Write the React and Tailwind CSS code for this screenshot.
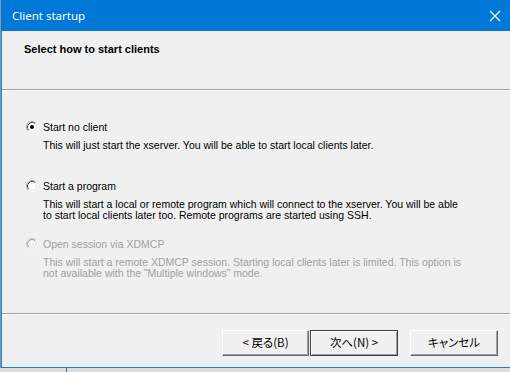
import React from 'react';

const ui = { fontFamily: '"Liberation Sans", Arial, sans-serif' };
const jp = { fontFamily: '"Noto Sans CJK JP", "Liberation Sans", sans-serif' };

const Radio = ({ checked, disabled }) => (
    <svg width="12" height="12" viewBox="0 0 12 12" className="shrink-0">
        <circle cx="6" cy="6" r="5" fill={disabled ? '#f0f0f0' : '#ffffff'} />
        <path d="M2.11 9.89 A5.5 5.5 0 0 1 9.89 2.11" fill="none" stroke={disabled ? '#c8c8c8' : '#a0a0a0'} strokeWidth="1" />
        <path d="M9.89 2.11 A5.5 5.5 0 0 1 2.11 9.89" fill="none" stroke="#ffffff" strokeWidth="1" />
        <path d="M2.82 9.18 A4.5 4.5 0 0 1 9.18 2.82" fill="none" stroke={disabled ? '#a0a0a0' : '#505050'} strokeWidth="1" />
        <path d="M9.18 2.82 A4.5 4.5 0 0 1 2.82 9.18" fill="none" stroke="#e3e3e3" strokeWidth="1" />
        {checked && <circle cx="6" cy="6" r="2" fill="#000000" />}
    </svg>
);

const Option = ({ label, lines, checked, disabled, className }) => (
    <div className={className}>
        <div className="flex items-center h-[14px]">
            <div className="w-[19px] pl-[2px]">
                <Radio checked={checked} disabled={disabled} />
            </div>
            <span className={`text-[10.5px] leading-[14px] ${disabled ? 'text-[#a0a0a0]' : 'text-black'}`}>{label}</span>
        </div>
        <div className={`mt-[6px] pl-[19px] text-[10.5px] leading-[11px] ${disabled ? 'text-[#a0a0a0]' : 'text-black'}`}>
            {lines.map((l, i) => (
                <div key={i} className="whitespace-nowrap">{l}</div>
            ))}
        </div>
    </div>
);

const Button = ({ children, isDefault, className }) => (
    <div
        className={`flex items-center justify-center h-[26px] bg-[#f0f0f0] text-[11.5px] text-black ${isDefault ? 'border border-[#3c3c3c] shadow-[inset_1px_1px_0_#ffffff,inset_-1px_-1px_0_#a0a0a0]' : 'border-t border-l border-t-white border-l-white border-b border-r border-b-[#696969] border-r-[#696969] shadow-[inset_-1px_-1px_0_#a0a0a0]'} ${className}`}
        style={jp}
    >
        <span className="[font-feature-settings:'palt']">{children}</span>
    </div>
);

export default function App() {
    return (
        <div className="w-[510px] h-[372px] flex flex-col bg-[#dcdcdc] overflow-hidden" style={ui}>
            <div className="flex h-[368px]">
                <div className="w-[1px] bg-[#8a96a3]" />
                {/* Window */}
                <div className="flex-1 flex flex-col border-l border-b border-[#1883d7] bg-[#f0f0f0]">
                    {/* Title bar */}
                    <div className="h-[31px] -ml-[1px] bg-[#0078d7] flex items-center justify-between pl-[11px] pr-[9px]">
                        <span className="text-white text-[11.5px]" style={{ fontFamily: '"Noto Sans", sans-serif' }}>Client startup</span>
                        <svg width="12" height="12" viewBox="0 0 12 12">
                            <path d="M1 1 L11 11 M11 1 L1 11" stroke="#ffffff" strokeWidth="1.1" />
                        </svg>
                    </div>

                    {/* Header */}
                    <div className="h-[58px] pl-[22px] pt-[11px]">
                        <div className="text-[11px] font-bold leading-[14px] text-black">Select how to start clients</div>
                    </div>
                    <div className="h-[1px] bg-[#a0a0a0]" />
                    <div className="h-[1px] bg-white" />

                    {/* Options */}
                    <div className="flex-1 pt-[29px] pl-[22px]">
                        <Option
                            checked
                            label="Start no client"
                            lines={["This will just start the xserver. You will be able to start local clients later."]}
                        />
                        <Option
                            className="mt-[28px]"
                            label="Start a program"
                            lines={[
                                "This will start a local or remote program which will connect to the xserver. You will be able",
                                "to start local clients later too. Remote programs are started using SSH.",
                            ]}
                        />
                        <Option
                            className="mt-[16px]"
                            disabled
                            label="Open session via XDMCP"
                            lines={[
                                "This will start a remote XDMCP session. Starting local clients later is limited. This option is",
                                "not available with the \u02dcMultiple windows\u02dc mode.",
                            ]}
                        />
                    </div>

                    <div className="h-[1px] bg-[#a0a0a0]" />
                    <div className="h-[1px] bg-white" />

                    {/* Footer */}
                    <div className="h-[52px] flex justify-end pt-[15px] pr-[12px]">
                        <Button className="w-[87px]">&lt; 戻る(B)</Button>
                        <Button isDefault className="w-[88px] ml-[1px]">次へ(N) &gt;</Button>
                        <Button className="w-[88px] ml-[12px]">キャンセル</Button>
                    </div>
                </div>
            </div>
            <div className="flex-1 flex">
                <div className="w-[66px]" />
                <div className="w-[1px] bg-[#1a6fc4]" />
            </div>
        </div>
    );
}
